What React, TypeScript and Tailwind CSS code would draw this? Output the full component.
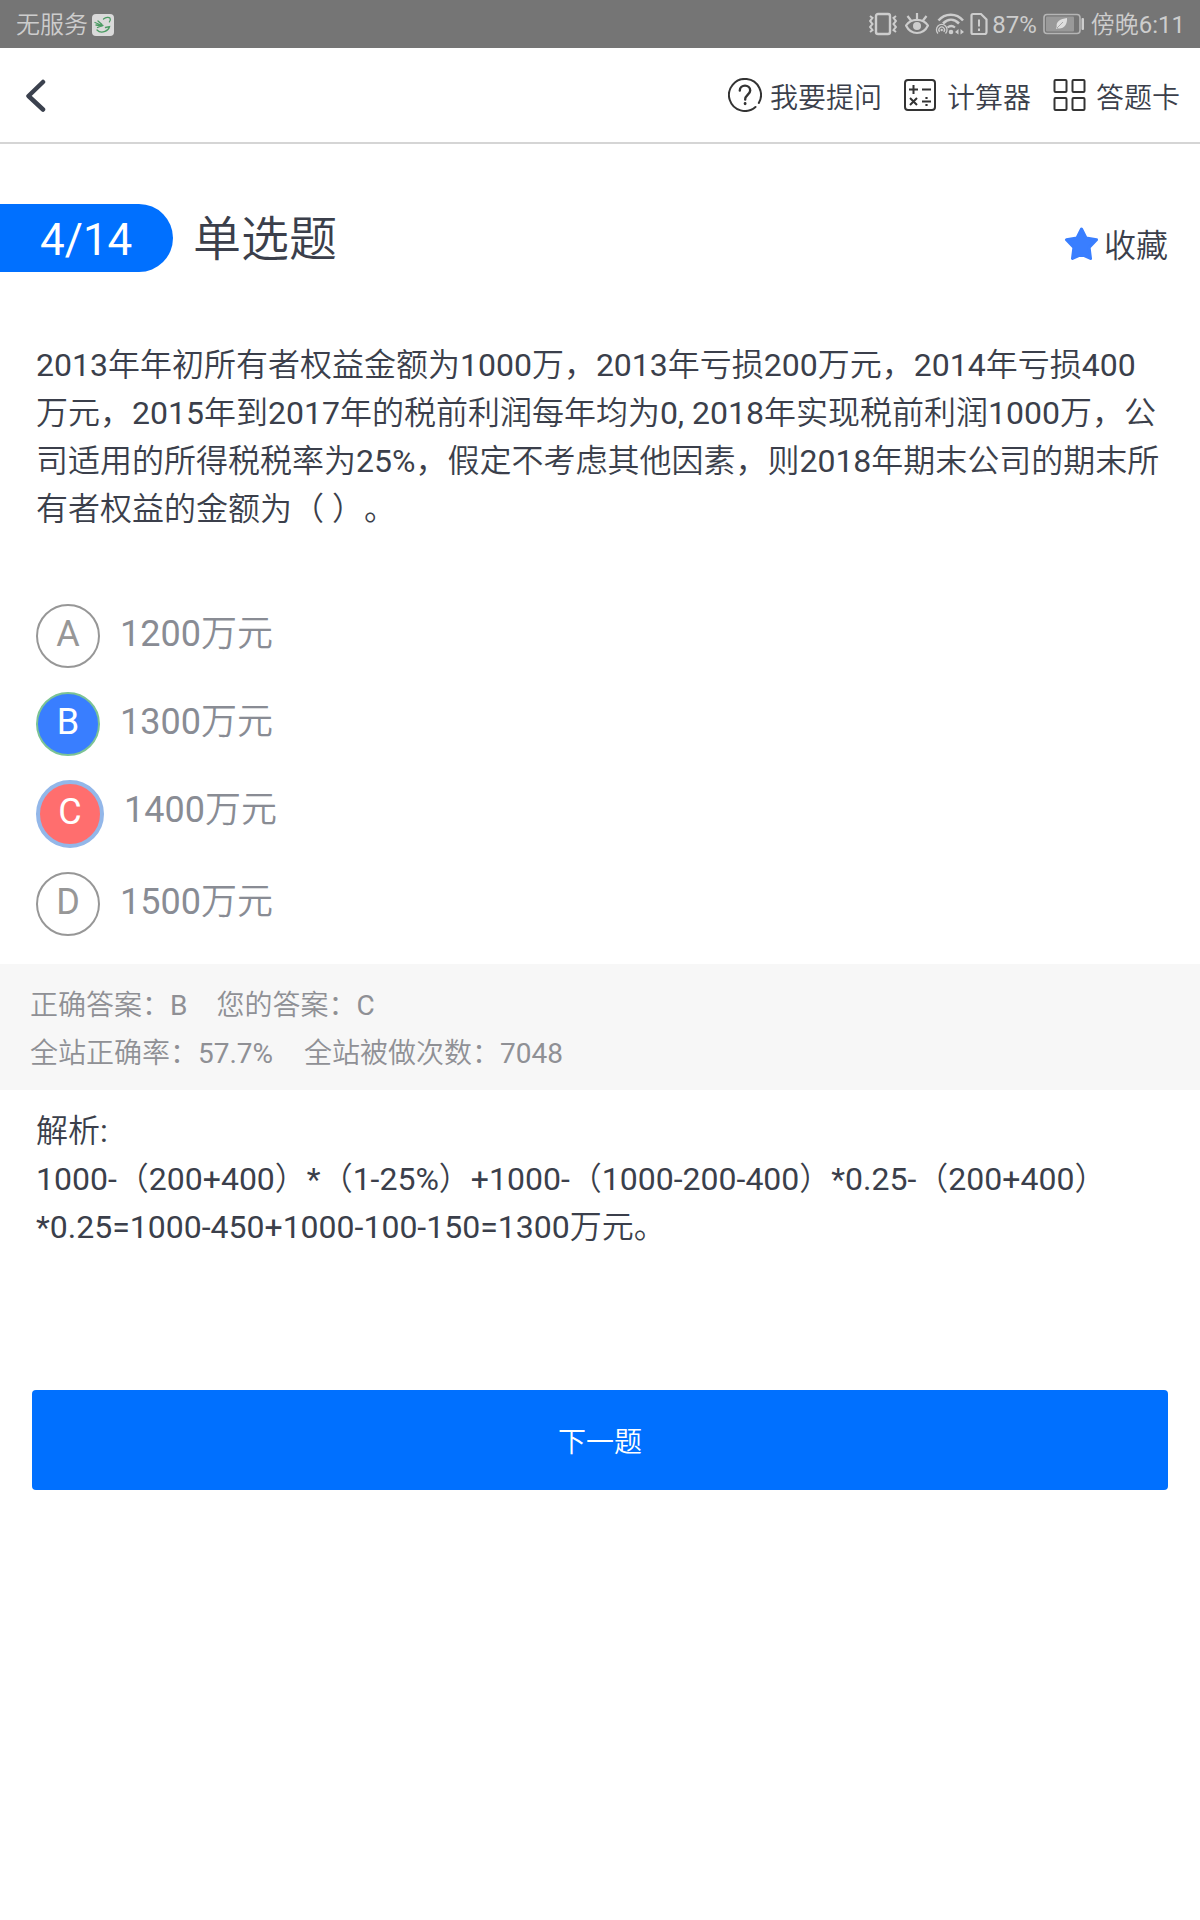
import type { ReactNode } from 'react'

type OptionState = 'default' | 'correct' | 'wrong'

interface Option {
  key: string
  text: string
  state: OptionState
}

const options: Option[] = [
  { key: 'A', text: '1200万元', state: 'default' },
  { key: 'B', text: '1300万元', state: 'correct' },
  { key: 'C', text: '1400万元', state: 'wrong' },
  { key: 'D', text: '1500万元', state: 'default' },
]

const badgeStyles: Record<OptionState, string> = {
  default: 'size-16 border-2 border-[#979797] text-[#979797]',
  correct: 'size-16 border-2 border-[#7cc395] bg-[#397eff] text-white',
  wrong: 'size-[68px] border-4 border-[#93b7e9] bg-[#ff6e6e] text-white',
}

function StatusBar() {
  return (
    <div className="flex h-12 items-center justify-between bg-[#757575] pl-4 pr-[15px] text-2xl leading-none text-[#cdcdcd]">
      <div className="flex items-center">
        <span className="pt-0.5">无服务</span>
        <svg className="ml-1 mt-0.5" width="22" height="22" viewBox="0 0 22 22" fill="none">
          <rect width="22" height="22" rx="4" fill="#dadada" />
          <g stroke="#4a9b62" strokeWidth="1.3" strokeLinecap="round">
            <path d="M11.500 5C14 3 17 2.800 18 4.200c.7 1.300.2 2.800-.6 3.700" />
            <path d="M3 8.500l7 3M4 11l6 1M6 7l4 3.500M5.500 13.500L11 11.500" />
            <path d="M5 16c2 2.200 5 2.600 8 1.400 2.500-1 4-3 4.500-4.700l-4 .8" />
          </g>
        </svg>
      </div>
      <div className="flex items-center">
        {/* vibrate */}
        <svg width="28" height="24" viewBox="0 0 28 24" fill="none" stroke="#cdcdcd">
          <rect x="7" y="2" width="14" height="20" rx="2" strokeWidth="2.400" />
          <path d="M1 4l2.500 2L1 9l2.500 3L1 15l2.500 3L1 20" strokeWidth="2" />
          <path d="M27 4l-2.500 2L27 9l-2.500 3L27 15l-2.500 3L27 20" strokeWidth="2" />
        </svg>
        {/* eye comfort */}
        <svg className="ml-2" width="24" height="24" viewBox="0 0 24 24" fill="none" stroke="#cdcdcd" strokeWidth="2.200">
          <path d="M1 13.500C6 6 18 6 23 13.500 18 23.500 6 23.500 1 13.500z" />
          <path d="M12 7V1M6 8.500L2.500 4M18 8.500L21.500 4" />
          <circle cx="12" cy="14" r="4" fill="#cdcdcd" stroke="none" />
        </svg>
        {/* wifi with hotspot */}
        <svg className="ml-1.5" width="30" height="24" viewBox="0 0 30 24" fill="none" stroke="#cdcdcd">
          <path d="M3.500 8.500C10 .8 21.500.8 28 8.500" strokeWidth="2.500" />
          <path d="M8 11.500c5-5 11-5 16 0" strokeWidth="2.500" />
          <path d="M12.500 15.500c2.500-2 5-2 7.500 0" strokeWidth="2.200" />
          <path d="M3 21.500a5.300 5.300 0 1 1 7.500 0" strokeWidth="1.300" />
          <path d="M4.700 19.800a2.800 2.800 0 1 1 4 0" strokeWidth="1.300" />
          <circle cx="6.700" cy="18" r="1.200" fill="#cdcdcd" stroke="none" />
          <circle cx="16" cy="20" r="2.300" fill="#cdcdcd" stroke="none" />
          <path d="M23.500 17v5.500L20 20zM25.500 17v5.500L29 20z" fill="#cdcdcd" stroke="none" />
        </svg>
        {/* sim alert */}
        <svg className="ml-[5px]" width="18" height="24" viewBox="0 0 18 24" fill="none" stroke="#cdcdcd" strokeWidth="2.200">
          <path d="M3 2h8l5.500 5.500V20a2 2 0 0 1-2 2H3a1.500 1.500 0 0 1-1.500-1.500v-17A1.500 1.500 0 0 1 3 2z" />
          <path d="M9 7.500v7M9 16.500v2.500" strokeWidth="2" />
        </svg>
        <span className="ml-1 pt-0.5">87%</span>
        {/* battery */}
        <svg className="ml-1.5" width="42" height="22" viewBox="0 0 42 22" fill="none">
          <rect x="1" y="1.500" width="36" height="19" rx="3" stroke="#b5b5b5" strokeWidth="1.600" />
          <rect x="3" y="3.500" width="28" height="15" rx="1" fill="#999999" />
          <path d="M24 5c-7 1-11 3.500-10.300 8.500l-.7 2.800 1.600-1C20.500 16.500 24.500 12 24 5z" fill="#dedede" />
          <path d="M14 15l6-6" stroke="#999999" strokeWidth=".8" />
          <rect x="38.500" y="5" width="2.500" height="12" rx="1" fill="#cdcdcd" />
        </svg>
        <span className="ml-1.5 pt-0.5">傍晚6:11</span>
      </div>
    </div>
  )
}

function HeaderAction({ icon, label, className }: { icon: ReactNode; label: string; className: string }) {
  return (
    <button type="button" className={`flex items-center ${className}`}>
      {icon}
      <span className="pt-2 leading-9">{label}</span>
    </button>
  )
}

function Header() {
  return (
    <header className="flex h-24 items-center justify-between border-b-2 border-[#d5d5d5] pl-[25px] pr-5 text-[28px] text-[#3b3f4b]">
      <button type="button" aria-label="返回">
        <svg width="22" height="34" viewBox="0 0 22 34" fill="none" stroke="#3b414e" strokeWidth="4.500" strokeLinecap="round" strokeLinejoin="round">
          <path d="M18 4L3.500 18 18 31.500" />
        </svg>
      </button>
      <div className="flex items-center">
        <HeaderAction
          className="gap-2"
          label="我要提问"
          icon={
            <svg width="34" height="34" viewBox="0 0 34 34" fill="none" stroke="#333" strokeWidth="2" strokeLinecap="round">
              <path d="M27.500 29A16 16 0 1 1 30.800 25" />
              <path d="M11.800 12.500c0-6.500 10.400-6.500 10.400 0 0 4-5 4.500-5 9" strokeWidth="2.400" />
              <path d="M17.100 25.500v.3" strokeWidth="2.800" />
            </svg>
          }
        />
        <HeaderAction
          className="ml-[22px] gap-[11px]"
          label="计算器"
          icon={
            <svg width="32" height="32" viewBox="0 0 32 32" fill="none" stroke="#333" strokeWidth="2">
              <rect x="1" y="1" width="30" height="30" rx="3" />
              <path d="M5 10.500h9M9.500 6v9M18 10.500h9M18 22.500h9M6 19l7 7M13 19l-7 7" />
              <path d="M22.500 18v2M22.500 25v2" strokeWidth="2.200" />
            </svg>
          }
        />
        <HeaderAction
          className="ml-[22px] gap-2.5"
          label="答题卡"
          icon={
            <svg width="33" height="32" viewBox="0 0 33 32" fill="none" stroke="#333" strokeWidth="2">
              <rect x="1.500" y="1" width="12" height="12" rx="1" />
              <rect x="19.500" y="1" width="12" height="12" rx="1" />
              <rect x="1.500" y="19" width="12" height="12" rx="1" />
              <rect x="19.500" y="19" width="12" height="12" rx="1" />
            </svg>
          }
        />
      </div>
    </header>
  )
}

function QuestionTitle() {
  return (
    <div className="mt-[60px] flex h-[68px] items-center">
      <div className="flex h-[68px] w-[173px] items-center rounded-r-full bg-[#0070ff] pl-10 pt-1 text-[44px] leading-none text-white">
        4/14
      </div>
      <h1 className="ml-5 pt-1 text-5xl leading-none">单选题</h1>
      <button type="button" className="ml-auto mr-8 flex items-center gap-1.5 pt-3 text-[32px] leading-10">
        <svg width="34" height="34" viewBox="0 0 34 34" fill="#397eff" stroke="#397eff" strokeWidth="3" strokeLinejoin="round">
          <path d="M17.500 2l4.500 9 10.500 1.800-7.400 7.700 1.400 11L17.500 27.500 8.500 31.500l1.400-11L2.500 12.800 13 11z" />
        </svg>
        <span className="pt-1">收藏</span>
      </button>
    </div>
  )
}

function OptionRow({ option }: { option: Option }) {
  return (
    <li className="flex items-start gap-5">
      <span className={`flex items-center justify-center rounded-full pb-1 leading-none ${badgeStyles[option.state]}`}>
        {option.key}
      </span>
      <span className="leading-[60px] text-[#898c94]">{option.text}</span>
    </li>
  )
}

export default function App() {
  return (
    <div
      lang="zh-CN"
      className="min-h-[1920px] w-[1200px] bg-white font-['Roboto','Noto_Sans_CJK_SC_DemiLight','Noto_Sans_CJK_SC',sans-serif] text-[#3b3f4b] [text-spacing-trim:space-all]"
    >
      <StatusBar />
      <Header />
      <QuestionTitle />

      <p className="mt-[69px] px-9 text-[32px] leading-[48px]">
        2013年年初所有者权益金额为1000万，2013年亏损200万元，2014年亏损400万元，2015年到2017年的税前利润每年均为0, 2018年实现税前利润1000万，公司适用的所得税税率为25%，假定不考虑其他因素，则2018年期末公司的期末所有者权益的金额为（ ）。
      </p>

      <ul className="mt-[71px] flex flex-col gap-6 px-9 text-4xl">
        {options.map((option) => (
          <OptionRow key={option.key} option={option} />
        ))}
      </ul>

      <section className="mt-7 h-[126px] bg-[#f7f7f7] px-[30px] pt-[18px] text-[28px] leading-[48px] text-[#8f9095]">
        <div className="flex gap-[29px]">
          <span>正确答案：B</span>
          <span>您的答案：C</span>
        </div>
        <div className="flex gap-[31px]">
          <span>全站正确率：57.7%</span>
          <span>全站被做次数：7048</span>
        </div>
      </section>

      <section className="px-9 pt-[17px] text-[32px] leading-[48px]">
        <h2>解析:</h2>
        <p>
          1000-（200+400）*（1-25%）+1000-（1000-200-400）*0.25-（200+400）
          <br />
          *0.25=1000-450+1000-100-150=1300万元。
        </p>
      </section>

      <div className="mt-[139px] px-8">
        <button type="button" className="h-[100px] w-full rounded bg-[#0070ff] pt-1.5 text-[28px] text-white">
          下一题
        </button>
      </div>
    </div>
  )
}
